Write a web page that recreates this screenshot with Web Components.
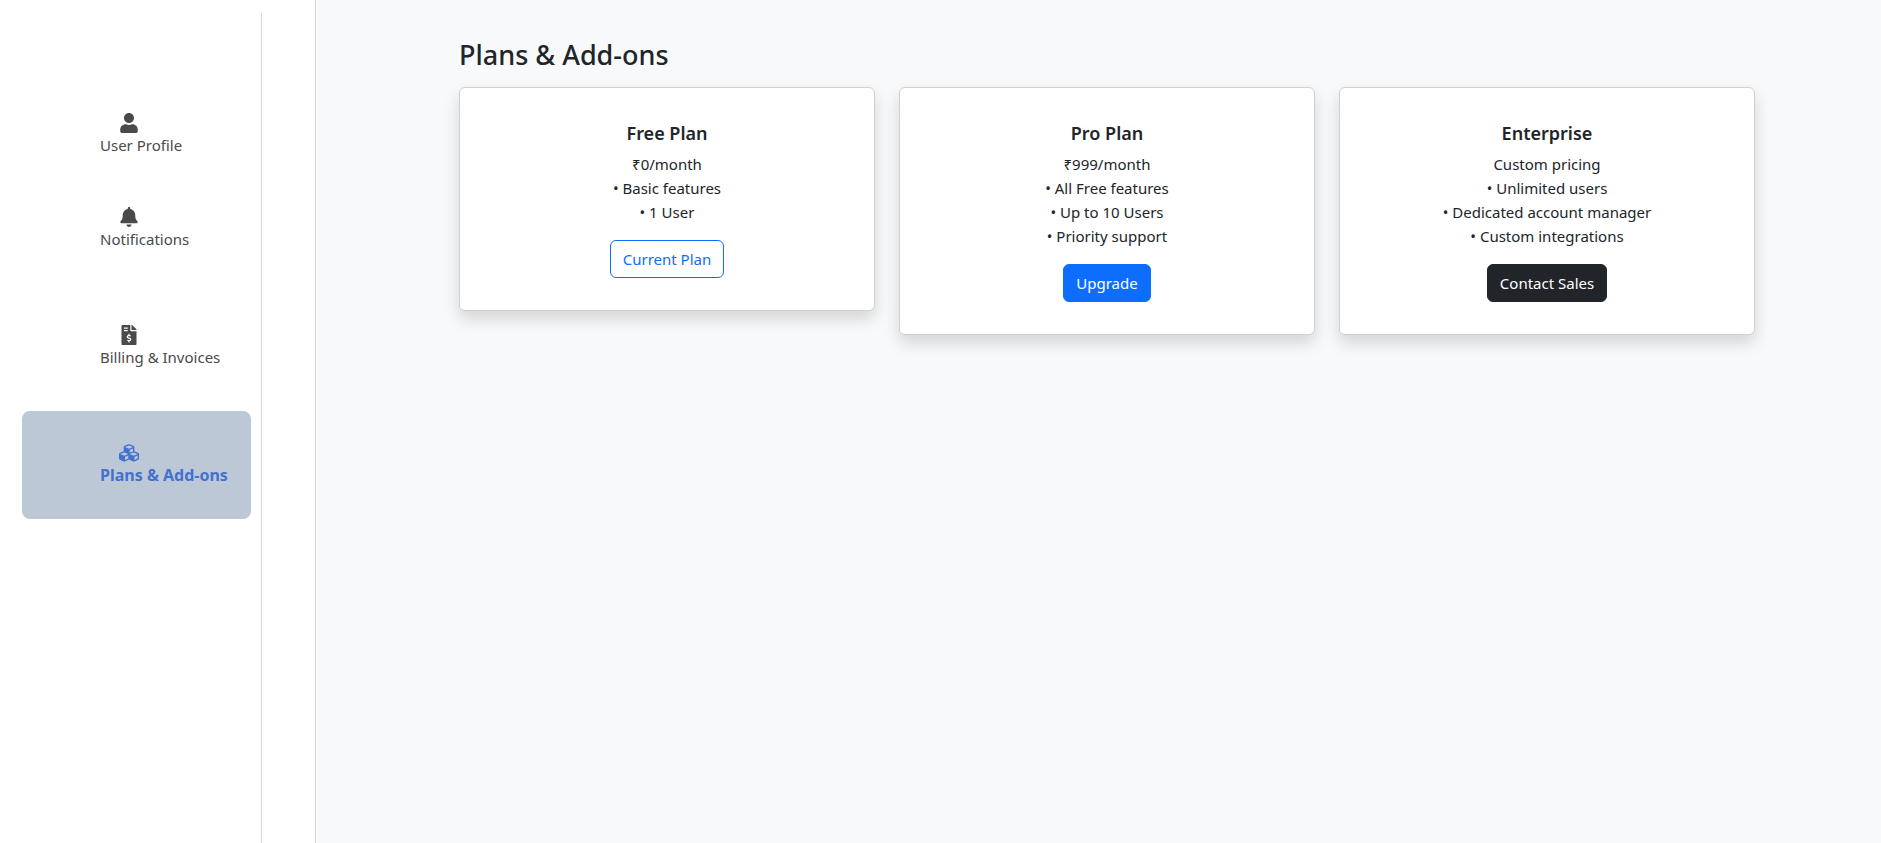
<!DOCTYPE html>
<html lang="en">
<head>
<meta charset="utf-8">
<meta name="viewport" content="width=device-width, initial-scale=1">
<title>Plans &amp; Add-ons</title>
<style>
  body {
    margin: 0;
    font: 15px/24px "Noto Sans", "Open Sans", sans-serif;
    color: #212529;
    background: #f8f9fb;
  }
</style>
</head>
<body>
<settings-page>
  <settings-nav slot="nav">
    <nav-item icon="user" compact>User Profile</nav-item>
    <nav-item icon="bell">Notifications</nav-item>
    <nav-item icon="invoice">Billing &amp; Invoices</nav-item>
    <nav-item icon="cubes" active>Plans &amp; Add-ons</nav-item>
  </settings-nav>
  <plan-list heading="Plans &amp; Add-ons">
    <plan-card name="Free Plan" price="₹0/month" features="Basic features|1 User" action="Current Plan" variant="outline"></plan-card>
    <plan-card name="Pro Plan" price="₹999/month" features="All Free features|Up to 10 Users|Priority support" action="Upgrade" variant="primary"></plan-card>
    <plan-card name="Enterprise" price="Custom pricing" features="Unlimited users|Dedicated account manager|Custom integrations" action="Contact Sales" variant="dark"></plan-card>
  </plan-list>
</settings-page>

<script>
  const ICONS = {
    user: ['0 0 448 512', 'M224 256c70.7 0 128-57.3 128-128S294.7 0 224 0 96 57.3 96 128s57.3 128 128 128zm89.6 32h-16.7c-22.2 10.2-46.9 16-72.9 16s-50.6-5.8-72.9-16h-16.7C60.2 288 0 348.2 0 422.4V464c0 26.5 21.5 48 48 48h352c26.5 0 48-21.5 48-48v-41.6c0-74.2-60.2-134.4-134.4-134.4z'],
    bell: ['0 0 448 512', 'M224 512c35.32 0 63.97-28.65 63.97-64H160.03c0 35.35 28.65 64 63.97 64zm215.39-149.71c-19.32-20.76-55.47-51.99-55.47-154.29 0-77.7-54.48-139.9-127.94-155.16V32c0-17.67-14.32-32-31.98-32s-31.98 14.33-31.98 32v20.84C118.56 68.1 64.08 130.3 64.08 208c0 102.3-36.15 133.53-55.47 154.29-6 6.45-8.66 14.16-8.61 21.71.11 16.4 12.98 32 32.1 32h383.8c19.12 0 32-15.6 32.1-32 .05-7.55-2.61-15.27-8.61-21.71z'],
    invoice: ['0 0 384 512', 'M377 105L279.1 7c-4.5-4.5-10.6-7-17-7H256v128h128v-6.1c0-6.3-2.5-12.4-7-16.9zm-153 31V0H24C10.7 0 0 10.7 0 24v464c0 13.3 10.7 24 24 24h336c13.3 0 24-10.7 24-24V160H248c-13.2 0-24-10.8-24-24zM64 72c0-4.42 3.58-8 8-8h80c4.42 0 8 3.58 8 8v16c0 4.42-3.58 8-8 8H72c-4.42 0-8-3.58-8-8V72zm0 80v-16c0-4.42 3.58-8 8-8h80c4.42 0 8 3.58 8 8v16c0 4.42-3.58 8-8 8H72c-4.42 0-8-3.58-8-8zm144 263.88V440c0 4.42-3.58 8-8 8h-16c-4.42 0-8-3.58-8-8v-24.29c-11.29-.58-22.27-4.52-31.37-11.35-3.9-2.93-4.1-8.77-.57-12.14l11.75-11.21c2.77-2.64 6.89-2.76 10.13-.73 3.87 2.42 8.26 3.72 12.82 3.72h28.11c6.5 0 11.8-5.92 11.8-13.19 0-5.95-3.61-11.19-8.77-12.73l-45-13.5c-18.59-5.58-31.58-23.42-31.58-43.39 0-24.52 19.05-44.44 42.67-45.07V232c0-4.42 3.58-8 8-8h16c4.42 0 8 3.58 8 8v24.29c11.29.58 22.27 4.51 31.37 11.35 3.9 2.93 4.1 8.77.57 12.14l-11.75 11.21c-2.77 2.64-6.89 2.76-10.13.73-3.87-2.43-8.26-3.72-12.82-3.72h-28.11c-6.5 0-11.8 5.92-11.8 13.19 0 5.95 3.61 11.19 8.77 12.73l45 13.5c18.59 5.58 31.58 23.42 31.58 43.39 0 24.53-19.05 44.44-42.67 45.07z'],
    cubes: ['0 0 512 512', 'M488.6 250.2L392 214V105.5c0-15-9.3-28.4-23.4-33.7l-100-37.5c-8.1-3.1-17.1-3.1-25.3 0l-100 37.5c-14.1 5.3-23.4 18.7-23.4 33.7V214l-96.6 36.2C9.3 255.5 0 268.9 0 283.9V394c0 13.6 7.7 26.1 19.9 32.2l100 50c10.1 5.1 22.1 5.1 32.2 0l103.9-52 103.9 52c10.1 5.1 22.1 5.1 32.2 0l100-50c12.2-6.1 19.9-18.6 19.9-32.2V283.9c0-15-9.3-28.4-23.4-33.7zM358 214.8l-85 31.9v-68.2l85-37v73.3zM154 104.1l102-38.2 102 38.2v.6l-102 41.4-102-41.4v-.6zm84 291.1l-85 42.5v-79.1l85-38.8v75.4zm0-112l-102 41.4-102-41.4v-.6l102-38.2 102 38.2v.6zm240 112l-85 42.5v-79.1l85-38.8v75.4zm0-112l-102 41.4-102-41.4v-.6l102-38.2 102 38.2v.6z']
  };

  class SettingsPage extends HTMLElement {
    constructor() {
      super();
      this.attachShadow({ mode: 'open' }).innerHTML = `
        <style>
          :host { display: flex; min-height: 100vh; }
          aside {
            box-sizing: border-box; flex: none; width: 316px; padding-top: 13px;
            display: flex; background: #fff; border-right: 1px solid #d7d8da;
          }
          main { flex: 1; min-width: 0; padding: 38px 0 38px 17px; }
        </style>
        <aside><slot name="nav"></slot></aside>
        <main><slot></slot></main>`;
    }
  }

  class SettingsNav extends HTMLElement {
    constructor() {
      super();
      this.attachShadow({ mode: 'open' }).innerHTML = `
        <style>
          :host { display: flex; width: 261px; border-right: 1px solid #d7d8da; }
          nav { flex: 1; display: flex; flex-direction: column; gap: 10px; padding: 68px 10px 0 22px; }
        </style>
        <nav aria-label="Settings"><slot></slot></nav>`;
    }
  }

  class NavItem extends HTMLElement {
    constructor() {
      super();
      const [box, path] = ICONS[this.getAttribute('icon')];
      const current = this.hasAttribute('active') ? 'aria-current="page"' : '';
      this.attachShadow({ mode: 'open' }).innerHTML = `
        <style>
          :host { display: block; }
          a {
            display: flex; flex-direction: column; padding: 32px 0 32px 78px;
            border-radius: 8px; color: #4a4a4a; text-decoration: none; white-space: nowrap;
          }
          svg { width: 20px; height: 20px; margin-left: 19px; fill: currentColor; }
          :host([compact]) a { padding-bottom: 8px; }
          :host([active]) a { background: #bdc8d7; color: #4470cf; font-size: 16px; font-weight: 700; }
        </style>
        <a href="#" ${current}>
          <svg viewBox="${box}" aria-hidden="true"><path d="${path}"/></svg>
          <span><slot></slot></span>
        </a>`;
    }
  }

  class PlanList extends HTMLElement {
    constructor() {
      super();
      this.attachShadow({ mode: 'open' }).innerHTML = `
        <style>
          :host { display: block; max-width: 1296px; margin: 0 auto; }
          h1 { margin: 0 0 15px; font-size: 27px; line-height: 34px; font-weight: 500; }
          .plans { display: grid; grid-template-columns: repeat(3, 1fr); gap: 24px; align-items: start; }
        </style>
        <h1></h1>
        <div class="plans"><slot></slot></div>`;
      this.shadowRoot.querySelector('h1').textContent = this.getAttribute('heading');
    }
  }

  class PlanCard extends HTMLElement {
    constructor() {
      super();
      const items = this.getAttribute('features').split('|').map(f => `<li>• ${f}</li>`).join('');
      this.attachShadow({ mode: 'open' }).innerHTML = `
        <style>
          :host {
            display: block; padding: 32px; text-align: center; background: #fff;
            border: 1px solid #d0d1d2; border-radius: 6px;
            box-shadow: 0 8px 16px rgba(0, 0, 0, .15);
          }
          h2 { margin: 0 0 6px; font-size: 18px; line-height: 26px; font-weight: 600; }
          p, ul { margin: 0; padding: 0; list-style: none; }
          ul { margin-bottom: 16px; }
          button {
            display: block; margin: 0 auto; padding: 6px 12px; font: inherit;
            border: 1px solid; border-radius: 6px; cursor: pointer;
          }
          .outline { color: #0d6efd; background: transparent; border-color: #0d6efd; }
          .primary { color: #fff; background: #0d6efd; border-color: #0d6efd; }
          .dark { color: #fff; background: #212529; border-color: #212529; }
        </style>
        <h2>${this.getAttribute('name')}</h2>
        <p>${this.getAttribute('price')}</p>
        <ul>${items}</ul>
        <button type="button" class="${this.getAttribute('variant')}">${this.getAttribute('action')}</button>`;
    }
  }

  customElements.define('settings-page', SettingsPage);
  customElements.define('settings-nav', SettingsNav);
  customElements.define('nav-item', NavItem);
  customElements.define('plan-list', PlanList);
  customElements.define('plan-card', PlanCard);
</script>
</body>
</html>
